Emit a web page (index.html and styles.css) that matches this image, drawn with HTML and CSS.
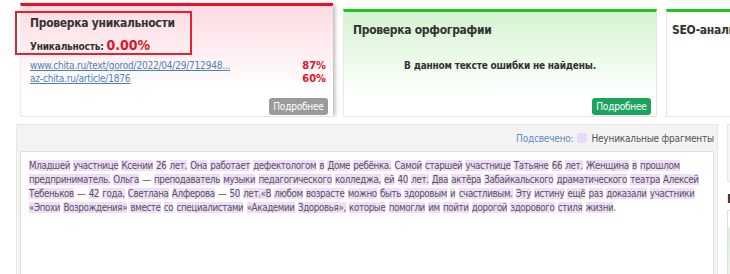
FILE: index.html
```html
<!DOCTYPE html>
<html>
<head>
    <link rel="stylesheet" href="styles.css">
    <title>Проверка текста</title>
</head>
<body>
    <div class="cards">
        <div class="card card-red">
            <div class="mark"></div>
            <h2 class="card-title">Проверка уникальности</h2>
            <p class="uniq">Уникальность: <span class="uniq-value">0.00%</span></p>
            <table class="sources">
                <tr><td><a href="#">www.chita.ru/text/gorod/2022/04/29/712948...</a></td><td class="perc">87%</td></tr>
                <tr><td><a href="#">az-chita.ru/article/1876</a></td><td class="perc">60%</td></tr>
            </table>
            <div class="card-foot"><button class="more more-gray">Подробнее</button></div>
        </div>
        <div class="card card-green">
            <h2 class="card-title">Проверка орфографии</h2>
            <p class="no-errors">В данном тексте ошибки не найдены.</p>
            <div class="card-foot"><button class="more more-green">Подробнее</button></div>
        </div>
        <div class="card card-green card-seo">
            <h2 class="card-title">SEO-анализ текста</h2>
            <table class="seo">
                <tr><td class="seo-label">Всего символов:</td><td>562</td></tr>
                <tr><td class="seo-label">Без пробелов:</td><td>478</td></tr>
                <tr><td class="seo-label">Количество слов:</td><td>72</td></tr>
            </table>
        </div>
    </div>
    <div class="lower">
        <div class="panel">
            <div class="panel-head">
                <span class="lit">Подсвечено:</span>
                <span class="swatch"></span>
                <span>Неуникальные фрагменты</span>
            </div>
            <div class="text-box">
                <span class="hl">Младшей</span> <span class="hl">участнице</span> <span class="hl">Ксении</span> <span class="hl">26</span> <span class="hl">лет.</span> <span class="hl">Она</span> <span class="hl">работает</span> <span class="hl">дефектологом</span> <span class="hl">в</span> <span class="hl">Доме</span> <span class="hl">ребёнка.</span> <span class="hl">Самой</span> <span class="hl">старшей</span> <span class="hl">участнице</span> <span class="hl">Татьяне</span> <span class="hl">66</span> <span class="hl">лет.</span> <span class="hl">Женщина</span> <span class="hl">в</span> <span class="hl">прошлом</span><br>
                <span class="hl">предприниматель.</span> <span class="hl">Ольга</span> — <span class="hl">преподаватель</span> <span class="hl">музыки</span> <span class="hl">педагогического</span> <span class="hl">колледжа,</span> <span class="hl">ей</span> <span class="hl">40</span> <span class="hl">лет.</span> <span class="hl">Два</span> <span class="hl">актёра</span> <span class="hl">Забайкальского</span> <span class="hl">драматического</span> <span class="hl">театра</span> <span class="hl">Алексей</span><br>
                <span class="hl">Тебеньков</span> — <span class="hl">42</span> <span class="hl">года,</span> <span class="hl">Светлана</span> <span class="hl">Алферова</span> — <span class="hl">50</span> <span class="hl">лет.«В</span> <span class="hl">любом</span> <span class="hl">возрасте</span> <span class="hl">можно</span> <span class="hl">быть</span> <span class="hl">здоровым</span> <span class="hl">и</span> <span class="hl">счастливым.</span> <span class="hl">Эту</span> <span class="hl">истину</span> <span class="hl">ещё</span> <span class="hl">раз</span> <span class="hl">доказали</span> <span class="hl">участники</span><br>
                <span class="hl">«Эпохи</span> <span class="hl">Возрождения»</span> <span class="hl">вместе</span> <span class="hl">со</span> <span class="hl">специалистами</span> <span class="hl">«Академии</span> <span class="hl">Здоровья»,</span> <span class="hl">которые</span> <span class="hl">помогли</span> <span class="hl">им</span> <span class="hl">пойти</span> <span class="hl">дорогой</span> <span class="hl">здорового</span> <span class="hl">стиля</span> <span class="hl">жизни</span>.
            </div>
        </div>
        <div class="side">
            <div class="side-box"></div>
            <h3 class="side-title">ВЫВОД</h3>
            <div class="side-chart"></div>
        </div>
    </div>
</body>
</html>
```

FILE: styles.css
```css
body {
    margin: 0;
    width: 730px;
    height: 274px;
    overflow: hidden;
    background: #fff;
    font-family: "DejaVu Sans Condensed", "DejaVu Sans", sans-serif;
    font-size: 10px;
    letter-spacing: -0.2px;
    color: #333;
}
.cards {
    display: flex;
    gap: 10px;
    padding-left: 20px;
    height: 117px;
    align-items: flex-start;
    overflow: hidden;
}
.card {
    flex: 0 0 313px;
    box-sizing: border-box;
    position: relative;
    display: flex;
    flex-direction: column;
    border-left: 1px solid #ececec;
    border-bottom: 1px solid #e4e4e4;
}
.card-red {
    margin-top: 3px;
    height: 114px;
    border-top: 3px solid #e3112d;
    background: linear-gradient(#fcdbe1, #fff 75%);
    box-shadow: 3px 0 4px -1px #b8b8b8;
}
.card-green {
    margin-top: 9px;
    height: 108px;
    flex-basis: 314px;
    border-top: 3px solid #1dc51d;
    background: linear-gradient(#d4f4cf, #fff 80%);
    border-right: 1px solid #e4e4e4;
}
.card-seo {
    margin-left: -1px;
    background: #fff;
    border-left: 1px solid #e4e4e4;
}
.mark {
    position: absolute;
    left: -6px;
    top: 5px;
    width: 173px;
    height: 40px;
    border: 2px solid #e5222d;
}
.card-title {
    margin: 0;
    font-size: 12px;
    letter-spacing: -0.3px;
    line-height: 16px;
    color: #333;
    padding: 10px 9px 0;
}
.card-red .card-title {
    padding-top: 9px;
}
.card-seo .card-title {
    padding-left: 5px;
}
.uniq {
    margin: 6px 0 0 9px;
    font-weight: bold;
    line-height: 16px;
}
.uniq-value {
    color: #e8101e;
    font-size: 14px;
    letter-spacing: 0;
}
.sources {
    margin: 4px 7px 0 9px;
    border-collapse: collapse;
    line-height: 13px;
}
.sources td {
    padding: 0;
}
.sources a {
    color: #4d7fb8;
}
.perc {
    text-align: right;
    color: #e8101e;
    font-weight: bold;
    font-size: 11px;
    letter-spacing: 0;
}
.card-foot {
    margin-top: auto;
    display: flex;
    justify-content: flex-end;
    padding: 0 5px 1px 0;
}
.more {
    border: none;
    border-radius: 3px;
    color: #fff;
    font-family: inherit;
    font-size: 10px;
    letter-spacing: -0.2px;
    height: 17px;
    width: 59px;
    padding: 0;
    line-height: 17px;
}
.more-gray {
    background: #9b9b9b;
}
.more-green {
    background: #1ca45e;
}
.no-errors {
    margin: 22px 0 0;
    text-align: center;
    font-weight: bold;
}
.seo {
    margin: 4px 0 0 28px;
    border-collapse: collapse;
    line-height: 17px;
}
.seo td {
    padding: 0 4px 0 0;
}
.seo-label {
    text-align: right;
}
.lower {
    display: flex;
    gap: 9px;
    padding: 7px 0 0 16px;
}
.panel {
    flex: 0 0 702px;
    min-width: 0;
    box-sizing: border-box;
    height: 160px;
    background: #f3f3f3;
    border: 1px solid #e8e8e8;
    padding: 0 3px 0 3px;
}
.panel-head {
    display: flex;
    justify-content: flex-end;
    align-items: center;
    gap: 4px;
    height: 26px;
    color: #555;
}
.lit {
    color: #5b8ec4;
}
.swatch {
    width: 10px;
    height: 10px;
    background: #ecdafa;
}
.text-box {
    background: #fff;
    border: 1px solid #e0e0e0;
    height: 140px;
    padding: 7px 8px 5px;
    color: #555;
    font-size: 9.7px;
    line-height: 14px;
    letter-spacing: -0.35px;
    word-spacing: 0.8px;
    white-space: nowrap;
    overflow: hidden;
}
.hl {
    background: #f0dcfb;
}
.side {
    flex: 1;
}
.side-box {
    height: 56px;
    border: 1px solid #e6e6e6;
    background: #f6f6f6;
}
.side-title {
    margin: 9px 0 0;
    font-size: 12px;
    line-height: 16px;
}
.side-chart {
    margin-top: 3px;
    height: 80px;
    border: 1px solid #e0e0e0;
    background: linear-gradient(#fff 15px, #d8f0d8 18px, #eef8ee);
}
```
